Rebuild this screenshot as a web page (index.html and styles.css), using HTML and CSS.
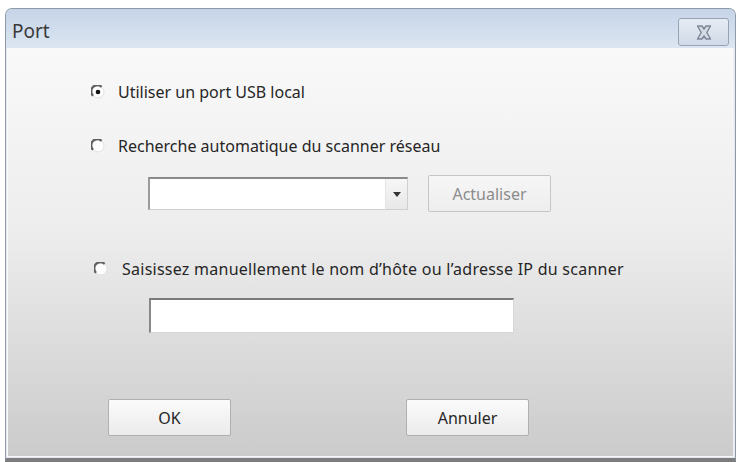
FILE: index.html
```html
<!DOCTYPE html>
<html lang="fr">
<head>
<meta charset="utf-8">
<title>Port</title>
<link rel="stylesheet" href="styles.css">
</head>
<body>
<div class="window">
  <div class="titlebar">
    <span class="title">Port</span>
    <span class="close">
      <svg width="22" height="17" viewBox="0 0 22 17"><path d="M4.5 2 L9 2 L11 5 L13 2 L17.5 2 L13.8 8.5 L17.5 15 L13 15 L11 12 L9 15 L4.5 15 L8.2 8.5 Z" fill="#d3dae4" stroke="#7b8594" stroke-width="1.4" stroke-linejoin="round"/></svg>
    </span>
  </div>
  <div class="client">
    <label class="opt opt1">
      <svg class="radio" width="14" height="14" viewBox="0 0 14 14"><circle cx="7" cy="7" r="6" fill="#fdfdfd" stroke="#e2e2e2" stroke-width="1"/><path d="M2.1 10.8 A6 6 0 0 1 10.6 1.9" fill="none" stroke="#5f5f5f" stroke-width="2.2"/><circle cx="7" cy="7" r="2.3" fill="#111"/></svg>
      <span>Utiliser un port USB local</span>
    </label>
    <label class="opt opt2">
      <svg class="radio" width="14" height="14" viewBox="0 0 14 14"><circle cx="7" cy="7" r="6" fill="#fdfdfd" stroke="#e2e2e2" stroke-width="1"/><path d="M2.1 10.8 A6 6 0 0 1 10.6 1.9" fill="none" stroke="#5f5f5f" stroke-width="2.2"/></svg>
      <span>Recherche automatique du scanner réseau</span>
    </label>
    <div class="scanrow">
      <div class="combo"><span class="dd"><span class="arrow"></span></span></div>
      <div class="btn disabled abtn">Actualiser</div>
    </div>
    <label class="opt opt3">
      <svg class="radio" width="14" height="14" viewBox="0 0 14 14"><circle cx="7" cy="7" r="6" fill="#fdfdfd" stroke="#e2e2e2" stroke-width="1"/><path d="M2.1 10.8 A6 6 0 0 1 10.6 1.9" fill="none" stroke="#5f5f5f" stroke-width="2.2"/></svg>
      <span class="wide">Saisissez manuellement le nom d’hôte ou l’adresse IP du scanner</span>
    </label>
    <div class="hostinput"></div>
    <div class="actions">
      <div class="btn okbtn">OK</div>
      <div class="btn cancelbtn">Annuler</div>
    </div>
  </div>
</div>
</body>
</html>
```
FILE: styles.css
```css
* { box-sizing: border-box; }
html, body { margin: 0; padding: 0; background: #fff; }
body { width: 740px; height: 462px; overflow: hidden; font-family: "Noto Sans", "DejaVu Sans", sans-serif; color: #262626; }

.window {
  margin: 8px 4px 0 5px;
  height: 454px;
  border: 1px solid #8f9aa8;
  border-bottom: 4px solid #7c7c7c;
  border-radius: 7px 7px 0 0;
  background: #e4e8ee;
  display: flex;
  flex-direction: column;
  padding: 0 1px 1px 1px;
}

.titlebar {
  height: 39px;
  display: flex;
  align-items: center;
  justify-content: space-between;
  padding: 0 6px 0 6px;
  background: linear-gradient(#c6d4e8, #dce6f2);
  margin: 0 -1px;
  border-radius: 6px 6px 0 0;
}
.title { font-size: 19px; color: #3a3a3a; margin-top: 4px; }
.close {
  width: 51px; height: 28px;
  border: 1px solid #98a3b2;
  border-radius: 3px;
  background: linear-gradient(#e6ecf4, #d0dae8);
  display: flex; align-items: center; justify-content: center;
  margin-top: 7px;
}

.client {
  flex: 1;
  background: linear-gradient(#f9f9f9 0%, #ededed 45%, #cbcbcb 100%);
  border-left: 1px solid #fafafa;
  border-right: 1px solid #f2f2f2;
  border-bottom: 1px solid #f6f6f6;
  display: flex;
  flex-direction: column;
}

.opt { display: flex; align-items: center; font-size: 16px; height: 20px; }
.opt .radio { flex: none; }
.opt1 { margin: 34px 0 0 83px; gap: 13px; }
.opt2 { margin: 34px 0 0 83px; gap: 13px; }
.opt3 { margin: 47px 0 0 86px; gap: 14px; }
.wide { letter-spacing: 0.25px; }

.scanrow { display: flex; align-items: center; margin: 19px 0 0 140px; }
.combo {
  width: 260px; height: 33px;
  background: #fff;
  border: 1px solid #cfcfcf;
  border-top: 2px solid #8a8a8a;
  border-left: 2px solid #9a9a9a;
  display: flex;
  justify-content: flex-end;
}
.dd {
  width: 22px;
  height: 100%;
  background: linear-gradient(#f6f6f6, #e8e8e8);
  border-left: 1px solid #e4e4e4;
  display: flex; align-items: center; justify-content: center;
}
.arrow {
  width: 0; height: 0;
  border-left: 4px solid transparent; border-right: 4px solid transparent;
  border-top: 5px solid #333;
}
.btn {
  height: 37px;
  border: 1px solid #b0b0b0;
  border-radius: 2px;
  background: linear-gradient(#fbfbfb, #ebebeb);
  display: flex; align-items: center; justify-content: center;
  font-size: 16px; color: #262626;
}
.abtn { width: 123px; margin-left: 20px; }
.disabled { color: #8c8c8c; border-color: #c6c6c6; background: linear-gradient(#f6f6f6, #eeeeee); }

.hostinput {
  width: 365px; height: 35px;
  margin: 19px 0 0 141px;
  background: #fff;
  border: 1px solid #d6d6d6;
  border-top: 2px solid #7a7a7a;
  border-left: 2px solid #888;
}

.actions { display: flex; margin: 66px 0 0 100px; gap: 175px; }
.okbtn, .cancelbtn { width: 123px; }
```
